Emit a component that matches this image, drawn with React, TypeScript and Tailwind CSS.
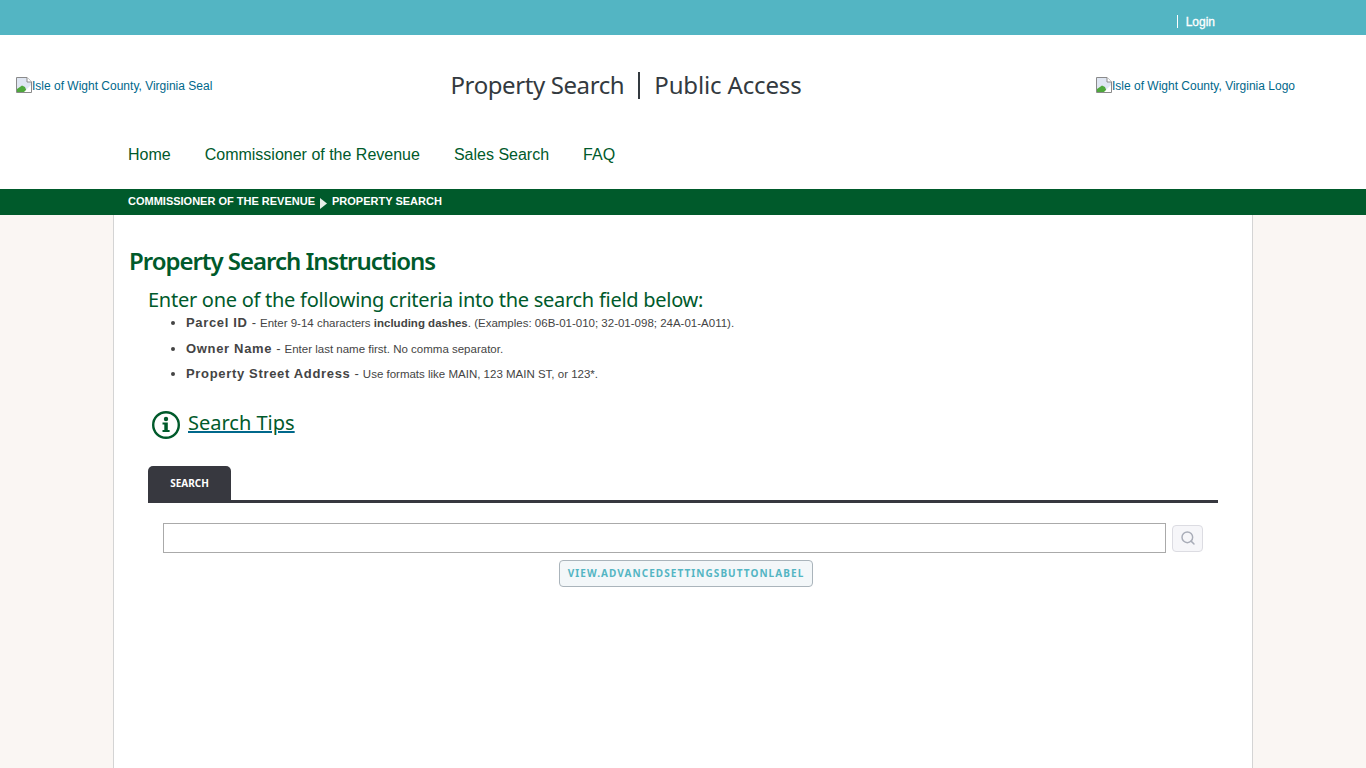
import React from "react";
import { Search } from "lucide-react";

const sans = "font-['Liberation_Sans',Arial,sans-serif]";
const brand = "font-['Noto_Sans',sans-serif]";

function BrokenImage() {
  return (
    <svg width="16" height="16" viewBox="0 0 16 16" className="mt-[-1px] shrink-0">
      <path d="M0.5 0.5H11L15.5 5V15.5H0.5Z" fill="#dfe6f2" stroke="#8a8a8a" />
      <path d="M11 0.5V5H15.5" fill="#fff" stroke="#8a8a8a" />
      <path d="M1 15V12L6 8.5L9 10L11 15Z" fill="#4fa83d" />
      <path d="M8 15L15 8V15Z" fill="#fff" />
    </svg>
  );
}

function BrokenLogo({ alt }: { alt: string }) {
  return (
    <a href="#" className={`flex items-start text-[12px] leading-[16px] text-[#00688b] ${sans}`}>
      <BrokenImage />
      <span>{alt}</span>
    </a>
  );
}

function InfoIcon() {
  return (
    <svg width="30" height="30" viewBox="0 0 30 30" className="shrink-0">
      <circle cx="15" cy="15" r="12.8" fill="none" stroke="#005a2b" strokeWidth="2.4" />
      <circle cx="15" cy="9" r="2.2" fill="#005a2b" />
      <path d="M11.5 12.5H16.8V20H18.6V22H11.5V20H13.3V14.5H11.5Z" fill="#005a2b" />
    </svg>
  );
}

const criteria = [
  {
    label: "Parcel ID",
    rowClass: "h-[26px]",
    body: (
      <>
        Enter 9-14 characters <b>including dashes</b>. (Examples: 06B-01-010; 32-01-098; 24A-01-A011).
      </>
    ),
  },
  { label: "Owner Name", rowClass: "h-[25px]", body: <>Enter last name first. No comma separator.</> },
  { label: "Property Street Address", rowClass: "h-[25px]", body: <>Use formats like MAIN, 123 MAIN ST, or 123*.</> },
];

export default function App() {
  const navLinks = ["Home", "Commissioner of the Revenue", "Sales Search", "FAQ"];

  return (
    <div className={`min-h-screen bg-[#faf6f3] ${sans}`}>
      {/* Top bar */}
      <div className="flex h-[35px] items-center justify-end bg-[#53b5c3] pr-[151px] pt-[8px]">
        <span className="mr-[8px] h-[13px] w-px bg-white" />
        <a href="#" className="text-[12px] text-white [-webkit-text-stroke:0.3px_white]">Login</a>
      </div>

      {/* Header */}
      <div className="bg-white">
        <div className="flex h-[100px] items-center justify-between pr-[71px] pl-[16px] pt-[2px]">
          <div className="w-[300px]">
            <BrokenLogo alt="Isle of Wight County, Virginia Seal" />
          </div>
          <h1 className={`mt-[-2px] ml-[-160px] flex items-center text-[24px] leading-[32px] text-[#333a40] ${brand}`}>
            <span className="tracking-[-0.4px]">Property Search</span>
            <span className="mx-[14px] h-[27px] w-[2px] bg-[#333a40]" />
            <span className="tracking-[-0.15px]">Public Access</span>
          </h1>
          <div>
            <BrokenLogo alt="Isle of Wight County, Virginia Logo" />
          </div>
        </div>
        <nav className="flex h-[54px] gap-[34px] pl-[128px] pt-[9px]">
          {navLinks.map((link) => (
            <a key={link} href="#" className="text-[16px] leading-[22px] text-[#005a2b]">{link}</a>
          ))}
        </nav>
      </div>

      {/* Breadcrumb */}
      <div className="flex h-[26px] items-center bg-[#005a2b] pb-[2px] pl-[128px] text-[11px] font-bold text-white">
        <span>COMMISSIONER OF THE REVENUE</span>
        <svg width="7" height="11" viewBox="0 0 7 11" className="mx-[5px] mt-[4px]">
          <path d="M0 0L7 5.5L0 11Z" fill="#e8efe9" />
        </svg>
        <span>PROPERTY SEARCH</span>
      </div>

      {/* Main panel */}
      <main className="mx-[113px] h-[553px] border-x border-[#d4d4d4] bg-white">
        <div className={`pt-[29px] pl-[15px] ${brand}`}>
          <h2 className="text-[24px] leading-[34px] font-semibold tracking-[-1.03px] text-[#005a2b]">
            Property Search Instructions
          </h2>
        </div>

        <div className="pl-[34px] pr-[34px]">
          <p className={`mt-[8px] text-[20px] leading-[28px] tracking-[-0.27px] text-[#005a2b] ${brand}`}>
            Enter one of the following criteria into the search field below:
          </p>
          <ul className="mt-[1px] ml-[22px] list-disc pl-[16px] text-[#444]">
            {criteria.map((item) => (
              <li key={item.label} className={`${item.rowClass} text-[13px] leading-[16px]`}>
                <b className="tracking-[0.67px]">{item.label}</b>
                <span className="mx-[4px]">-</span>
                <span className="text-[11.5px]">{item.body}</span>
              </li>
            ))}
          </ul>

          <div className="mt-[18px] flex items-center gap-[7px] pl-[3px]">
            <InfoIcon />
            <a href="#" className={`mb-[4px] text-[20px] leading-[28px] text-[#005a2b] underline decoration-[#00688b] ${brand}`}>
              Search Tips
            </a>
          </div>

          {/* Tabs */}
          <div className="mt-[25px] flex h-[37px] items-end border-b-[3px] border-[#37383f]">
            <div className={`flex h-[34px] w-[83px] items-center justify-center rounded-t-[5px] bg-[#37383f] text-[10px] font-bold text-white ${brand}`}>
              SEARCH
            </div>
          </div>

          {/* Search field */}
          <div className="mt-[20px] flex items-center pl-[15px] pr-[15px]">
            <input className="h-[30px] flex-1 border border-[#aaa] bg-white" />
            <button className="ml-[6px] flex h-[27px] w-[31px] items-center justify-center rounded-[4px] border border-[#dcdce2] bg-[#f6f6f9]">
              <Search size={16} strokeWidth={2.2} className="text-[#a9adb8]" />
            </button>
          </div>

          <div className="mt-[7px] flex justify-center pl-[6px]">
            <button className={`h-[27px] w-[254px] rounded-[4px] border border-[#aab4bb] bg-[#f3f7f9] text-[10px] font-bold tracking-[1.07px] text-[#53b5c3] ${brand}`}>
              VIEW.ADVANCEDSETTINGSBUTTONLABEL
            </button>
          </div>
        </div>
      </main>
    </div>
  );
}
